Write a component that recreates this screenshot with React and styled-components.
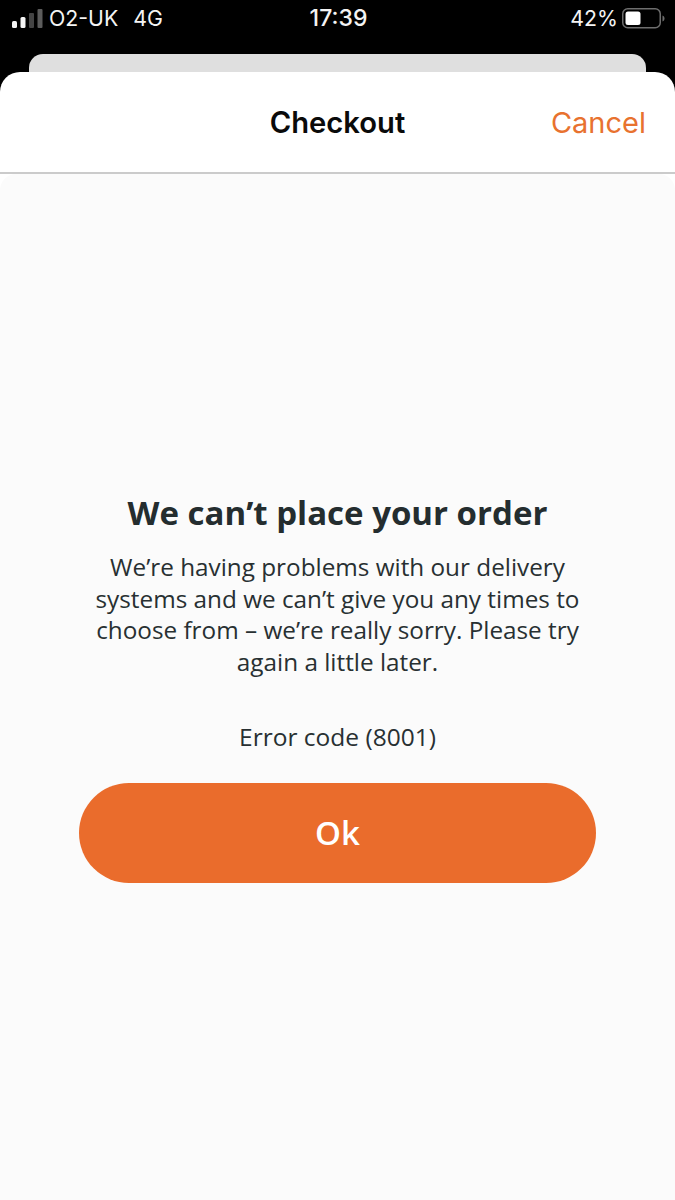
import styled, { createGlobalStyle } from "styled-components";

const GlobalStyle = createGlobalStyle`
    html, body {
        margin: 0;
        padding: 0;
        background: #000;
    }
`

const Screen = styled.div`
    width: 675px;
    height: 1200px;
    display: flex;
    flex-direction: column;
    overflow: hidden;
    background: #000;
`

const StatusBar = styled.div`
    height: 54px;
    flex: none;
    box-sizing: border-box;
    padding: 8px 10px 0 12px;
    display: grid;
    grid-template-columns: 1fr auto 1fr;
    align-items: start;
    color: #f4f4f4;
    font-family: Inter, "Liberation Sans", sans-serif;
    font-size: 21.3px;
    line-height: 21px;
`

const StatusLeft = styled.div`
    display: flex;
    align-items: center;
    gap: 5px;
`

const Carrier = styled.span`
    margin-right: 10px;
`

const Clock = styled.div`
    font-weight: 500;
    font-size: 23px;
`

const StatusRight = styled.div`
    display: flex;
    align-items: center;
    justify-content: flex-end;
    gap: 4px;
`

const BackCard = styled.div`
    height: 18px;
    flex: none;
    margin: 0 29px;
    background: #dfdfdf;
    border-radius: 14px 14px 0 0;
`

const Sheet = styled.div`
    flex: 1;
    display: flex;
    flex-direction: column;
    background: #fff;
    border-radius: 20px 20px 0 0;
    overflow: hidden;
`

const Header = styled.header`
    height: 102px;
    flex: none;
    box-sizing: border-box;
    border-bottom: 2px solid #cbcbcb;
    display: grid;
    grid-template-columns: 1fr auto 1fr;
    align-items: center;
    padding: 0 29px;
    font-family: Inter, "Liberation Sans", sans-serif;
    font-size: 29px;
`

const Title = styled.h1`
    margin: 0;
    font-size: 29.2px;
    font-weight: 600;
    color: #0a0a0a;
`

const CancelLink = styled.a`
    justify-self: end;
    color: #e8722f;
`

const Body = styled.main`
    flex: 1;
    background: #fbfbfb;
    border-radius: 16px 16px 0 0;
    display: flex;
    flex-direction: column;
    align-items: center;
    padding-top: 314px;
    font-family: "Open Sans", sans-serif;
    color: #283032;
    text-align: center;
`

const Heading = styled.h2`
    margin: 0 0 13px;
    font-size: 33px;
    line-height: 50px;
    font-weight: 700;
    color: #242d2f;
`

const Message = styled.p`
    margin: 0;
    width: 530px;
    font-size: 24.3px;
    line-height: 31.7px;
`

const ErrorCode = styled.p`
    margin: 43px 0 0;
    font-size: 24.5px;
    line-height: 32px;
`

const OkButton = styled.button`
    margin-top: 30px;
    width: 517px;
    height: 100px;
    border: none;
    border-radius: 50px;
    background: #ea6c2c;
    color: #fff;
    font-family: "Open Sans", sans-serif;
    font-size: 33px;
    font-weight: 600;
`

const SignalBars = () => (
    <svg width="32" height="20" viewBox="0 0 32 20">
        <rect x="0" y="12" width="5" height="7" rx="1.5" fill="#f4f4f4" />
        <rect x="8.5" y="8" width="5" height="11" rx="1.5" fill="#f4f4f4" />
        <rect x="17" y="4" width="5" height="15" rx="1" fill="#444" />
        <rect x="25.5" y="0" width="5" height="19" rx="1" fill="#5c5c5c" />
    </svg>
)

const BatteryIcon = () => (
    <svg width="43" height="21" viewBox="0 0 43 21">
        <rect x="0.75" y="0.75" width="37.5" height="19" rx="5" fill="none" stroke="#6e6e6e" strokeWidth="1.5" />
        <rect x="3.5" y="3.5" width="15" height="13.5" rx="2.5" fill="#fff" />
        <path d="M40.500 7.500c1.200.4 2 1.500 2 3s-.8 2.600-2 3z" fill="#6e6e6e" />
    </svg>
)

export default function App() {
    return (
        <Screen>
            <GlobalStyle />
            <StatusBar>
                <StatusLeft>
                    <SignalBars />
                    <Carrier>O2-UK</Carrier>
                    <span>4G</span>
                </StatusLeft>
                <Clock>17:39</Clock>
                <StatusRight>
                    <span>42%</span>
                    <BatteryIcon />
                </StatusRight>
            </StatusBar>
            <BackCard />
            <Sheet>
                <Header>
                    <span />
                    <Title>Checkout</Title>
                    <CancelLink>Cancel</CancelLink>
                </Header>
                <Body>
                    <Heading>We can’t place your order</Heading>
                    <Message>
                        We’re having problems with our delivery systems and we can’t give you any times to choose from – we’re really sorry. Please try again a little later.
                    </Message>
                    <ErrorCode>Error code (8001)</ErrorCode>
                    <OkButton>Ok</OkButton>
                </Body>
            </Sheet>
        </Screen>
    )
}
